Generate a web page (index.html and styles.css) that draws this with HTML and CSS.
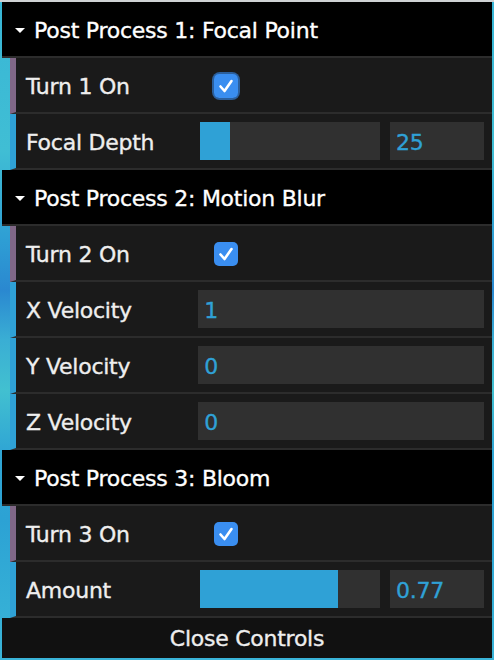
FILE: index.html
```html
<!DOCTYPE html>
<html>
<head>
<meta charset="utf-8">
<link rel="stylesheet" href="styles.css">
</head>
<body>
<div class="gui">
  <div class="folder">
    <div class="title"><span class="arrow"></span>Post Process 1: Focal Point</div>
    <div class="rows">
      <div class="cr boolean">
        <span class="name">Turn 1 On</span>
        <div class="c"><span class="check focus"><svg width="24" height="24" viewBox="0 0 24 24"><rect x="0" y="0" width="24" height="24" rx="5" fill="#3a8ef0"/><path d="M6.5 12.5 L10.5 17 L17.5 7" fill="none" stroke="#fff" stroke-width="2.6" stroke-linecap="round" stroke-linejoin="round"/></svg></span></div>
      </div>
      <div class="cr number">
        <span class="name">Focal Depth</span>
        <div class="c">
          <div class="slider"><div class="fill" style="width:16.7%"></div></div>
          <div class="num short">25</div>
        </div>
      </div>
    </div>
  </div>
  <div class="folder">
    <div class="title"><span class="arrow"></span>Post Process 2: Motion Blur</div>
    <div class="rows">
      <div class="cr boolean">
        <span class="name">Turn 2 On</span>
        <div class="c"><span class="check"><svg width="24" height="24" viewBox="0 0 24 24"><rect x="0" y="0" width="24" height="24" rx="5" fill="#3a8ef0"/><path d="M6.5 12.5 L10.5 17 L17.5 7" fill="none" stroke="#fff" stroke-width="2.6" stroke-linecap="round" stroke-linejoin="round"/></svg></span></div>
      </div>
      <div class="cr number">
        <span class="name">X Velocity</span>
        <div class="c"><div class="num wide">1</div></div>
      </div>
      <div class="cr number">
        <span class="name">Y Velocity</span>
        <div class="c"><div class="num wide">0</div></div>
      </div>
      <div class="cr number">
        <span class="name">Z Velocity</span>
        <div class="c"><div class="num wide">0</div></div>
      </div>
    </div>
  </div>
  <div class="folder">
    <div class="title"><span class="arrow"></span>Post Process 3: Bloom</div>
    <div class="rows">
      <div class="cr boolean">
        <span class="name">Turn 3 On</span>
        <div class="c"><span class="check"><svg width="24" height="24" viewBox="0 0 24 24"><rect x="0" y="0" width="24" height="24" rx="5" fill="#3a8ef0"/><path d="M6.5 12.5 L10.5 17 L17.5 7" fill="none" stroke="#fff" stroke-width="2.6" stroke-linecap="round" stroke-linejoin="round"/></svg></span></div>
      </div>
      <div class="cr number">
        <span class="name">Amount</span>
        <div class="c">
          <div class="slider"><div class="fill" style="width:76.7%"></div></div>
          <div class="num short">0.77</div>
        </div>
      </div>
    </div>
  </div>
  <div class="close">Close Controls</div>
</div>
</body>
</html>
```

FILE: styles.css
```css
html, body {
  margin: 0;
  padding: 0;
}
body {
  width: 494px;
  height: 658px;
  border-top: 2px solid #cfd2d4;
  background: linear-gradient(to bottom,
    #38b6d6 0px, #40bed4 150px, #2e9ed4 240px, #2a88d0 290px,
    #3aaed4 340px, #42c0d0 390px, #30a6d4 450px, #2ca2d4 520px,
    #34aed6 600px, #3ab4d8 660px);
  font-family: "DejaVu Sans", "Lucida Grande", sans-serif;
  font-size: 22px;
  letter-spacing: -0.25px;
  -webkit-text-stroke: 0.35px currentColor;
  overflow: hidden;
}
.gui {
  width: 490px;
  margin: 0 2px;
  display: flex;
  flex-direction: column;
}
.folder {
  display: flex;
  flex-direction: column;
}
.title {
  height: 54px;
  box-sizing: border-box;
  padding-top: 2px;
  background: #000;
  border-bottom: 2px solid #2c2c2c;
  color: #fff;
  display: flex;
  align-items: center;
  padding-left: 13px;
  box-sizing: content-box;
  height: 52px;
}
.arrow {
  width: 0;
  height: 0;
  border-left: 5px solid transparent;
  border-right: 5px solid transparent;
  border-top: 5px solid #fff;
  margin-right: 9px;
  margin-top: 0;
}
.rows {
  margin-left: 8px;
  display: flex;
  flex-direction: column;
}
.cr {
  height: 54px;
  background: #1a1a1a;
  border-bottom: 2px solid #2c2c2c;
  border-left: 6px solid #2fa1d6;
  padding: 0 8px 0 10px;
  display: flex;
  align-items: center;
  color: #eee;
}
.cr.boolean {
  border-left-color: #806787;
}
.name {
  flex: 0 0 40%;
  white-space: nowrap;
  padding-top: 2px;
}
.c {
  flex: 1;
  display: flex;
  align-items: center;
  height: 100%;
}
.check {
  display: flex;
  width: 24px;
  height: 24px;
  margin-left: 5px;
  margin-top: 2px;
  border-radius: 6px;
}
.check.focus {
  box-shadow: 0 0 0 2px #2b5f9c;
}
.slider {
  width: 180px;
  height: 38px;
  margin-left: -9px;
  background: #303030;
  display: flex;
}
.fill {
  background: #2fa1d6;
  height: 100%;
}
.num {
  height: 38px;
  background: #303030;
  color: #2fa1d6;
  display: flex;
  align-items: center;
  padding-left: 6px;
  padding-top: 2px;
  box-sizing: border-box;
}
.num.short {
  width: 94px;
  margin-left: auto;
}
.num.wide {
  flex: 1;
  margin-left: -11px;
}
.close {
  height: 40px;
  background: #111;
  color: #eee;
  display: flex;
  align-items: center;
  justify-content: center;
}
```
